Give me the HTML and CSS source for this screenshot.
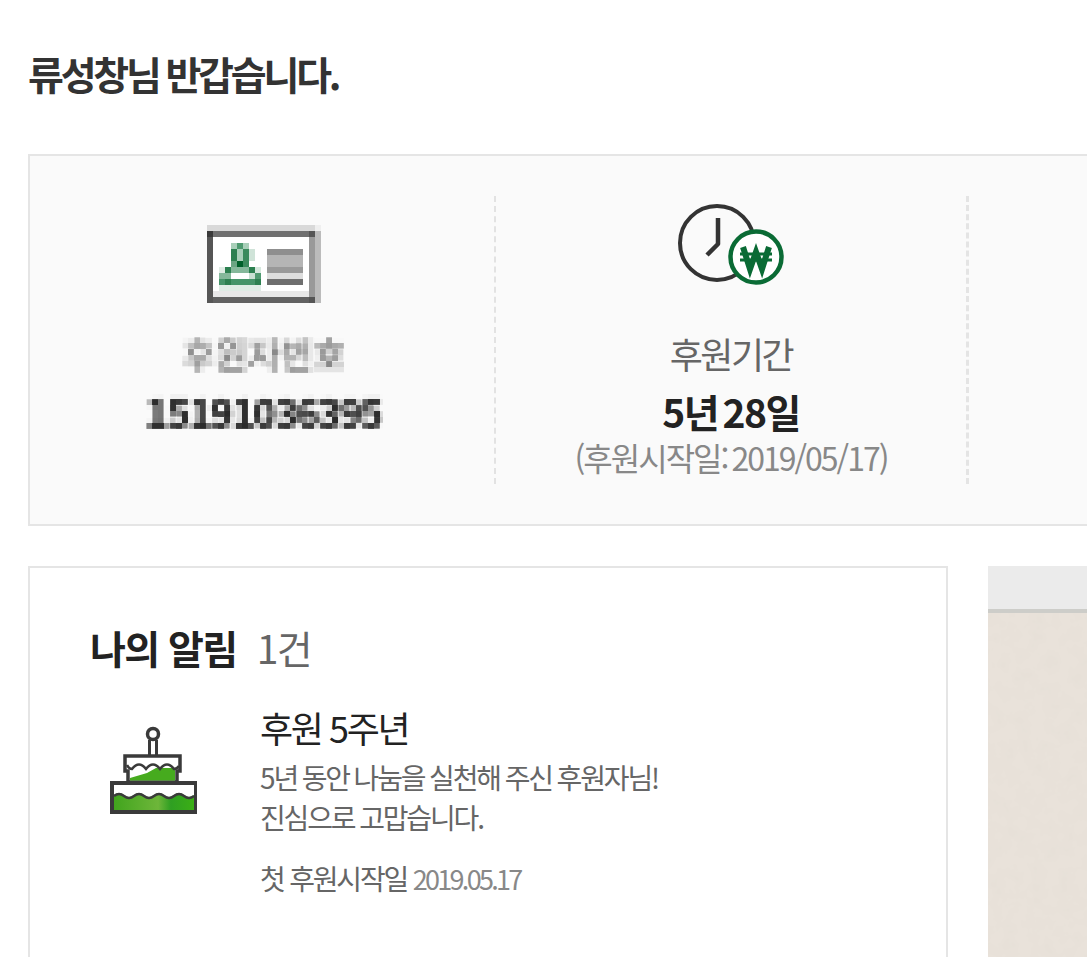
FILE: index.html
```html
<!DOCTYPE html>
<html lang="ko">
<head>
    <meta charset="UTF-8">
    <meta name="viewport" content="width=device-width, initial-scale=1.0">
    <title>나의 후원</title>
    <link rel="stylesheet" href="styles.css">
</head>
<body>
    <svg class="defs" width="0" height="0" aria-hidden="true">
        <filter id="mosaic" x="0" y="0" width="100%" height="100%">
            <feGaussianBlur in="SourceGraphic" stdDeviation="1.6" result="soft"/>
            <feFlood x="2" y="2" width="2" height="2" flood-color="#000"/>
            <feComposite width="6" height="6"/>
            <feTile result="dots"/>
            <feComposite in="soft" in2="dots" operator="in"/>
            <feMorphology operator="dilate" radius="2"/>
        </filter>
        <filter id="paper" x="0" y="0" width="100%" height="100%">
            <feTurbulence type="fractalNoise" baseFrequency="0.07" numOctaves="3" seed="4"/>
            <feColorMatrix type="matrix" values="0 0 0 0 0.72  0 0 0 0 0.68  0 0 0 0 0.62  0.35 0 0 0 -0.12"/>
        </filter>
        <linearGradient id="icing" x1="0" y1="0" x2="1" y2="0">
            <stop offset="0" stop-color="#3fa41c"/>
            <stop offset="0.55" stop-color="#6eb63a"/>
            <stop offset="0.7" stop-color="#2f9f22"/>
            <stop offset="1" stop-color="#3cb014"/>
        </linearGradient>
    </svg>

    <div class="container">
        <h1 class="greeting">류성창님 반갑습니다.</h1>

        <div class="summary">
            <div class="summary-item">
                <svg class="icon-card" width="114" height="78" viewBox="0 0 19 13" shape-rendering="crispEdges">
                    <rect x="0" y="0" width="18" height="1" fill="#d9d9d9"/>
                    <rect x="18" y="0" width="1" height="1" fill="#efefef"/>
                    <rect x="1" y="2" width="16" height="10" fill="#fff"/>
                    <rect x="1" y="11" width="16" height="1" fill="#e8e8e8"/>
                    <rect x="0" y="1" width="1" height="12" fill="#565656"/>
                    <rect x="1" y="1" width="16" height="1" fill="#707070"/>
                    <rect x="1" y="12" width="16" height="1" fill="#626262"/>
                    <rect x="17" y="2" width="1" height="10" fill="#999"/>
                    <rect x="18" y="1" width="1" height="12" fill="#bbb"/>
                    <rect x="0" y="1" width="1" height="1" fill="#3a3a3a"/>
                    <rect x="17" y="1" width="1" height="1" fill="#555"/>
                    <rect x="17" y="12" width="1" height="1" fill="#555"/>
                    <!-- person -->
                    <rect x="4" y="3" width="3" height="1" fill="#a9cfb9"/>
                    <rect x="5" y="3" width="1" height="1" fill="#4f9a70"/>
                    <rect x="4" y="4" width="1" height="2" fill="#2c8050"/>
                    <rect x="5" y="4" width="1" height="2" fill="#a9cfb9"/>
                    <rect x="6" y="4" width="1" height="2" fill="#3a8a5c"/>
                    <rect x="7" y="4" width="1" height="2" fill="#cfe3d8"/>
                    <rect x="4" y="6" width="1" height="1" fill="#6aa583"/>
                    <rect x="5" y="6" width="1" height="1" fill="#00602a"/>
                    <rect x="6" y="6" width="1" height="1" fill="#3a8a5c"/>
                    <rect x="2" y="7" width="1" height="1" fill="#e0ece5"/>
                    <rect x="3" y="7" width="1" height="1" fill="#2c8050"/>
                    <rect x="4" y="7" width="3" height="1" fill="#85b89b"/>
                    <rect x="7" y="7" width="1" height="1" fill="#2c8050"/>
                    <rect x="8" y="7" width="1" height="1" fill="#d5e8dd"/>
                    <rect x="2" y="8" width="2" height="1" fill="#85b89b"/>
                    <rect x="7" y="8" width="1" height="1" fill="#c8e0d2"/>
                    <rect x="8" y="8" width="1" height="1" fill="#4f9a70"/>
                    <rect x="2" y="9" width="7" height="1" fill="#459469"/>
                    <rect x="3" y="9" width="1" height="1" fill="#2c8050"/>
                    <rect x="8" y="9" width="1" height="1" fill="#2c8050"/>
                    <rect x="2" y="10" width="7" height="1" fill="#dfece5"/>
                    <!-- lines -->
                    <rect x="10" y="4" width="6" height="1" fill="#8f8f8f"/>
                    <rect x="10" y="5" width="6" height="2" fill="#b5b5b5"/>
                    <rect x="10" y="7" width="6" height="1" fill="#999"/>
                    <rect x="10" y="8" width="6" height="1" fill="#ddd"/>
                    <rect x="10" y="9" width="6" height="1" fill="#6f6f6f"/>
                </svg>
                <div class="item-label masked">후원자번호</div>
                <div class="item-value masked">15191036395</div>
            </div>
            <div class="summary-item">
                <svg class="icon-clock" width="106" height="84" viewBox="0 0 106 84">
                    <circle cx="39" cy="39" r="37" fill="none" stroke="#333" stroke-width="4"/>
                    <path d="M40 14V40L29 51" fill="none" stroke="#333" stroke-width="4.500" stroke-linejoin="round"/>
                    <circle cx="78" cy="53" r="25.500" fill="#fff" stroke="#0a6b35" stroke-width="4.500"/>
                    <path d="M65 43L72 65L78 48L84 65L91 43" fill="none" stroke="#0a6b35" stroke-width="6"/>
                    <path d="M62 50H94M62 56H94" fill="none" stroke="#0a6b35" stroke-width="3"/>
                </svg>
                <div class="item-label">후원기간</div>
                <div class="item-value">5년 28일</div>
                <div class="item-note">(후원시작일: 2019/05/17)</div>
            </div>
            <div class="summary-item"></div>
        </div>

        <div class="lower">
            <div class="notice-card">
                <h2 class="notice-title">나의 알림 <span class="notice-count">1건</span></h2>
                <div class="notice">
                    <svg class="icon-cake" width="88" height="90" viewBox="0 0 88 90">
                        <circle cx="44" cy="9" r="5.500" fill="#fff" stroke="#3a3a3a" stroke-width="3.500"/>
                        <path d="M40.500 15V30M47.500 15V30" fill="none" stroke="#3a3a3a" stroke-width="3"/>
                        <!-- top tier -->
                        <path d="M16 31H71V46H68V57H19V46H16Z" fill="#fff" stroke="#3a3a3a" stroke-width="3.500"/>
                        <path d="M21 53L38 48L47 43L66 43V55.500H21Z" fill="#46ab1e"/>
                        <path d="M18 40Q20 44 23 44Q30 35 37 44Q44 35 51 44Q58 35 65 44Q68 44 70 41" fill="none" stroke="#3a3a3a" stroke-width="2.500"/>
                        <!-- bottom tier -->
                        <rect x="3" y="58" width="84" height="29" fill="url(#icing)" stroke="#3a3a3a" stroke-width="4"/>
                        <path d="M5 60H85V70Q80 74 75 70Q70 66 65 70Q60 74 55 70Q50 66 45 70Q40 74 35 70Q30 66 25 70Q20 74 15 70Q10 66 5 70Z" fill="#fff"/>
                        <path d="M5 71Q10 67 15 71Q20 75 25 71Q30 67 35 71Q40 75 45 71Q50 67 55 71Q60 75 65 71Q70 67 75 71Q80 75 85 71" fill="none" stroke="#3a3a3a" stroke-width="2.500"/>
                    </svg>
                    <div class="notice-body">
                        <div class="notice-head">후원 5주년</div>
                        <p class="notice-text">5년 동안 나눔을 실천해 주신 후원자님!<br>진심으로 고맙습니다.</p>
                        <p class="notice-date">첫 후원시작일 <span class="date-num">2019.05.17</span></p>
                    </div>
                </div>
            </div>
            <div class="banner">
                <div class="banner-top"></div>
                <svg class="banner-paper" width="400" height="453">
                    <rect width="400" height="453" filter="url(#paper)"/>
                </svg>
            </div>
        </div>
    </div>
</body>
</html>
```

FILE: styles.css
```css
html, body {
    height: 100%;
    overflow: hidden;
}

body {
    font-family: "Noto Sans CJK KR", "Noto Sans", sans-serif;
    background: #fff;
    margin: 0;
    color: #222;
}

.defs {
    display: block;
    height: 0;
}

.container {
    width: 1500px;
    padding: 46px 28px 0;
}

.greeting {
    font-size: 39px;
    line-height: 54px;
    font-weight: 700;
    letter-spacing: -3.2px;
    word-spacing: -1px;
    color: #333;
    margin: 0 0 54px;
}

.summary {
    width: 1416px;
    height: 372px;
    box-sizing: border-box;
    display: flex;
    padding: 40px 0;
    background: #fafafa;
    border: 2px solid #e5e5e5;
}

.summary-item {
    box-sizing: border-box;
    width: 473px;
    display: flex;
    flex-direction: column;
    align-items: center;
    border-right: 3px dashed #e4e4e4;
    padding-top: 8px;
}

.summary-item:first-child {
    width: 466px;
    padding-left: 4px;
    border-right: 2px dashed #e2e2e2;
}

.summary-item:last-child {
    border-right: none;
}

.icon-card {
    margin: 21px 0 28px;
}

.icon-clock {
    margin-bottom: 43px;
}

.item-label {
    font-size: 36px;
    line-height: 44px;
    letter-spacing: -2.5px;
    color: #666;
}

.item-value {
    font-size: 39px;
    line-height: 60px;
    font-weight: 700;
    letter-spacing: -1.5px;
    word-spacing: -5px;
    color: #222;
    margin-top: 6px;
}

.item-note {
    font-size: 32px;
    line-height: 32px;
    letter-spacing: -2px;
    word-spacing: -3px;
    color: #888;
}

.masked {
    filter: url(#mosaic);
}

.item-label.masked {
    letter-spacing: -0.5px;
}

.lower {
    display: flex;
    gap: 40px;
    margin-top: 40px;
}

.notice-card {
    width: 920px;
    height: 500px;
    box-sizing: border-box;
    border: 2px solid #e5e5e5;
    padding: 49px 60px;
}

.notice-title {
    font-size: 39px;
    line-height: 60px;
    font-weight: 700;
    letter-spacing: -1.6px;
    margin: 0;
    color: #222;
}

.notice-count {
    font-weight: 400;
    color: #666;
    margin-left: 11px;
}

.notice {
    display: flex;
    margin-top: 28px;
}

.icon-cake {
    margin-top: 20px;
    margin-left: 19px;
    flex-shrink: 0;
}

.notice-body {
    margin-left: 63px;
}

.notice-head {
    font-size: 36px;
    line-height: 44px;
    letter-spacing: -2.4px;
    color: #222;
}

.notice-text {
    font-size: 28px;
    line-height: 40px;
    letter-spacing: -2.15px;
    word-spacing: -1px;
    color: #666;
    margin: 8px 0 0;
}

.notice-date {
    font-size: 28px;
    line-height: 40px;
    letter-spacing: -2.2px;
    color: #666;
    margin: 21px 0 0;
}

.date-num {
    font-size: 27px;
    letter-spacing: -2.7px;
    color: #888;
}

.banner {
    width: 400px;
    height: 500px;
    display: flex;
    flex-direction: column;
    background: #e9e2da;
}

.banner-top {
    height: 47px;
    background: #ebebeb;
    border-bottom: 4px solid #cdcdc9;
    box-sizing: border-box;
}

.banner-paper {
    display: block;
}
```
